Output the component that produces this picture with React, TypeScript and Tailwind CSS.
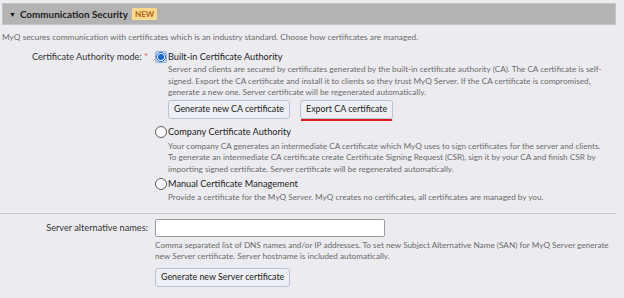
import React from "react";

function Radio({ checked }: { checked?: boolean }) {
  if (checked) {
    return (
      <span className="flex items-center justify-center w-[12px] h-[12px] bg-[#c9dcf5] border border-[#8fb3e6] rounded-[2px] shrink-0">
        <span className="flex items-center justify-center w-[10px] h-[10px] rounded-full border border-[#1a63d6] bg-white">
          <span className="w-[6px] h-[6px] rounded-full bg-[#1a63d6]" />
        </span>
      </span>
    );
  }
  return (
    <span className="flex items-center justify-center w-[12px] h-[12px] shrink-0">
      <span className="w-[12px] h-[12px] rounded-full border border-[#5a5a5a] bg-white" />
    </span>
  );
}

function Btn({ children }: { children: React.ReactNode }) {
  return (
    <button className="h-[19px] px-[5px] bg-[#eeeff4] border border-[#b8c3d6] rounded-[3px] text-[8.9px] leading-none text-[#222]">
      {children}
    </button>
  );
}

const desc = "pl-[13px] w-[448px] text-[8.2px] leading-[11.5px] text-[#6b6b6b]";

export default function App() {
  return (
    <div className="w-[624px] h-[298px] overflow-hidden bg-[#ececf0] text-[#333] font-['Lato',sans-serif]">
      <div className="pt-[3px] pl-[2px] pr-[8px]">
        <div className="h-[22px] bg-[#b3b3b3] border border-[#c4c4c4] flex items-center pl-[6px]">
          <span className="text-[7px] text-[#111] mr-[4px]">▼</span>
          <span className="font-bold text-[9.9px] text-[#1e1e1e]">Communication Security</span>
          <span className="ml-[4px] px-[3px] h-[12px] flex items-center bg-[#fcd98c] text-[#b5621d] text-[8px] font-bold leading-none rounded-[1px]">NEW</span>
        </div>
      </div>
      <div className="pl-[2px] mt-[6px] text-[8.3px] leading-[13px] text-[#6b6b6b]">
        MyQ secures communication with certificates which is an industry standard. Choose how certificates are managed.
      </div>
      <div className="flex mt-[6px]">
        <div className="w-[148px] shrink-0 text-right text-[9.2px] leading-[14px] text-[#333]">
          Certificate Authority mode: <span className="text-[#d9534f]">*</span>
        </div>
        <div className="pl-[7px] flex flex-col">
          <div className="flex items-center h-[14px]">
            <Radio checked />
            <span className="text-[9.2px] text-[#222] ml-[1px]">Built-in Certificate Authority</span>
          </div>
          <div className={desc}>
            Server and clients are secured by certificates generated by the built-in certificate authority (CA). The CA certificate is self-signed. Export the CA certificate and install it to clients so they trust MyQ Server. If the CA certificate is compromised, generate a new one. Server certificate will be regenerated automatically.
          </div>
          <div className="pl-[13px] mt-[1px] flex gap-[10px]">
            <Btn>Generate new CA certificate</Btn>
            <div className="flex flex-col">
              <Btn>Export CA certificate</Btn>
              <div className="h-[2px] bg-[#e0191e] mt-[0px] mx-[1px]" />
            </div>
          </div>
          <div className="flex items-center h-[14px] mt-[4px]">
            <Radio />
            <span className="text-[9.2px] text-[#222] ml-[1px]">Company Certificate Authority</span>
          </div>
          <div className={desc + " mt-[2px]"}>
            Your company CA generates an intermediate CA certificate which MyQ uses to sign certificates for the server and clients. To generate an intermediate CA certificate create Certificate Signing Request (CSR), sign it by your CA and finish CSR by importing signed certificate. Server certificate will be regenerated automatically.
          </div>
          <div className="flex items-center h-[14px] mt-[2px]">
            <Radio />
            <span className="text-[9.2px] text-[#222] ml-[1px]">Manual Certificate Management</span>
          </div>
          <div className={desc + " mt-[1px]"}>
            Provide a certificate for the MyQ Server. MyQ creates no certificates, all certificates are managed by you.
          </div>
        </div>
      </div>
      <div className="mt-[9px] w-[616px] h-[1px] bg-[#c8c8cc]" />
      <div className="flex mt-[5px]">
        <div className="w-[148px] shrink-0 text-right text-[9.2px] leading-[14px] pt-[2px] text-[#333]">
          Server alternative names:
        </div>
        <div className="pl-[7px] flex flex-col">
          <div className="w-[230px] h-[18px] bg-white border border-[#9a9a9a] rounded-[2px]" />
          <div className="mt-[3px] w-[455px] text-[8.2px] leading-[11.5px] text-[#6b6b6b]">
            Comma separated list of DNS names and/or IP addresses. To set new Subject Alternative Name (SAN) for MyQ Server generate new Server certificate. Server hostname is included automatically.
          </div>
          <div className="mt-[5px] flex">
            <Btn>Generate new Server certificate</Btn>
          </div>
        </div>
      </div>
    </div>
  );
}
